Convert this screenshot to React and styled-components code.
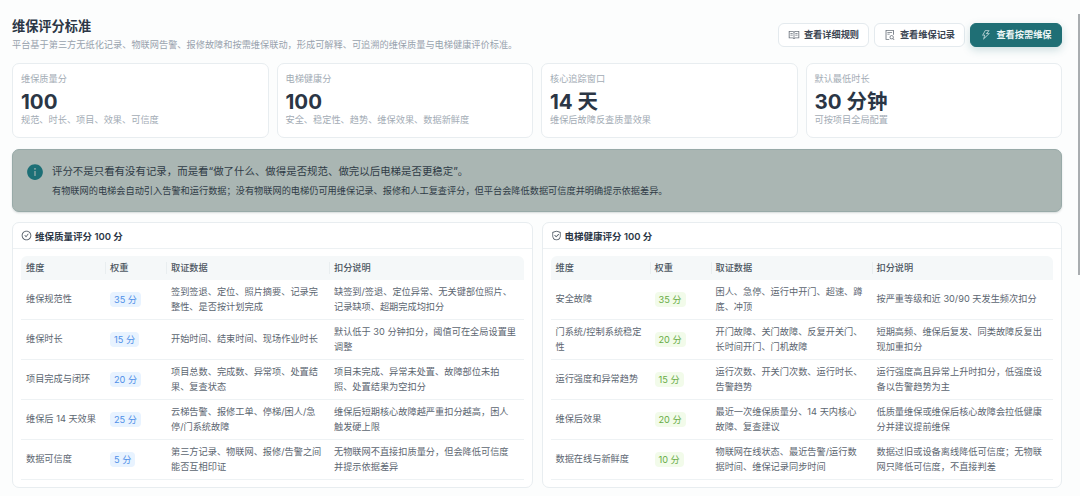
import React from "react";
import styled, { createGlobalStyle } from "styled-components";
import {
  AiFillInfoCircle,
  AiOutlineCheckCircle,
  AiOutlineFileSearch,
  AiOutlineRead,
  AiOutlineSafety,
  AiOutlineThunderbolt,
} from "react-icons/ai";

const Global = createGlobalStyle`
  html, body { margin: 0; padding: 0; background: #fcfdfd; overflow: hidden; }
  body {
    font-family: Inter, "Noto Sans CJK SC", "Noto Sans", sans-serif;
    color: #2b3645;
  }
`;

const Page = styled.main`
  position: relative;
  width: 1080px;
  height: 496px;
  box-sizing: border-box;
  padding: 16px 18px 0 12px;
  display: flex;
  flex-direction: column;
  overflow: hidden;
`;

/* thin scrollbar thumb at the window edge */
const ScrollThumb = styled.div`
  position: absolute;
  top: 14px;
  right: 0;
  width: 2px;
  height: 261px;
  background: #a9adb0;
`;

const Header = styled.header`
  display: flex;
  justify-content: space-between;
  align-items: flex-start;
  height: 47px;
`;

const Title = styled.h1`
  margin: 1px 0 0;
  font-size: 13.2px;
  line-height: 19px;
  font-weight: 700;
  color: #2b3645;
`;

const Subtitle = styled.p`
  margin: 2px 0 0;
  font-size: 9.2px;
  line-height: 14px;
  color: #98a2ad;
`;

const Actions = styled.div`
  display: flex;
  gap: 5px;
  margin-top: 7px;
`;

const Button = styled.button`
  height: 24px;
  width: ${({ $w }) => $w}px;
  box-sizing: border-box;
  display: inline-flex;
  align-items: center;
  justify-content: center;
  gap: 4px;
  padding: 0;
  border-radius: 6px;
  font: 600 9.2px/1 Inter, "Noto Sans CJK SC", sans-serif;
  border: 1px solid ${({ $primary }) => ($primary ? "#1f6f75" : "#e4eaee")};
  background: ${({ $primary }) => ($primary ? "#1f6f75" : "#fff")};
  color: ${({ $primary }) => ($primary ? "#eef6f6" : "#3b4552")};
  box-shadow: ${({ $primary }) => ($primary ? "0 3px 8px rgba(31,111,117,.22)" : "none")};
  svg { font-size: 12px; opacity: .75; }
`;

const Stats = styled.section`
  display: grid;
  grid-template-columns: repeat(4, 1fr);
  gap: 8px;
`;

const Stat = styled.article`
  height: 75px;
  box-sizing: border-box;
  padding: 9px 8px;
  border: 1px solid #e8edf0;
  border-radius: 7px;
  background: #fff;
`;

const StatLabel = styled.div`
  font-size: 9.2px;
  line-height: 12px;
  color: #a3acb5;
`;

const StatValue = styled.div`
  font-size: 20.5px;
  line-height: 24px;
  margin-top: 5px;
  font-weight: 700;
  color: #2b3645;
`;

const StatNote = styled.div`
  font-size: 9.2px;
  line-height: 12px;
  color: #a3acb5;
`;

const Alert = styled.section`
  margin-top: 11px;
  height: 63px;
  box-sizing: border-box;
  padding: 13px 13px;
  display: flex;
  gap: 8px;
  border: 1px solid #98aaa8;
  border-radius: 7px;
  background: #aab6b3;
  box-shadow: 0 1px 2px rgba(60,80,80,.2);
`;

const AlertIcon = styled(AiFillInfoCircle)`
  flex: none;
  font-size: 18px;
  color: #1d6f76;
`;

const AlertTitle = styled.div`
  font-size: 10.45px;
  line-height: 18px;
  color: #2f3b46;
`;

const AlertText = styled.div`
  margin-top: 3px;
  font-size: 9.2px;
  line-height: 13px;
  color: #2f3b46;
`;

const Panels = styled.section`
  margin-top: 10px;
  display: grid;
  grid-template-columns: 1fr 1fr;
  gap: 9px;
`;

const Panel = styled.article`
  height: 266px;
  box-sizing: border-box;
  border: 1px solid #e8edf0;
  border-radius: 7px;
  background: #fff;
  overflow: hidden;
`;

const PanelHead = styled.h2`
  margin: 0;
  height: 26px;
  box-sizing: border-box;
  padding: 0 8px;
  display: flex;
  align-items: center;
  gap: 3px;
  font-size: 9.5px;
  font-weight: 600;
  color: #2b3645;
  border-bottom: 1px solid #edf1f3;
  svg { font-size: 11px; color: #4a5561; }
`;

const PanelBody = styled.div`
  padding: 7px 8px 0;
`;

const Table = styled.table`
  width: 100%;
  table-layout: fixed;
  border-collapse: separate;
  border-spacing: 0;
  font-size: 9.2px;
  line-height: 14.5px;
  color: #5c6671;
`;

const Column = styled.col`
  width: ${({ $w }) => ($w ? `${$w}px` : "auto")};
`;

const Th = styled.th`
  position: relative;
  height: 24px;
  padding: 0 5px;
  text-align: left;
  font-weight: 500;
  color: #4d5762;
  background: #f5f8f9;
  &:first-child { border-radius: 6px 0 0 0; }
  &:last-child { border-radius: 0 6px 0 0; }
  &:not(:first-child)::before {
    content: "";
    position: absolute;
    left: 0;
    top: 6px;
    bottom: 6px;
    width: 1px;
    background: #e9eef0;
  }
`;

const Td = styled.td`
  height: 40px;
  box-sizing: border-box;
  padding: 0 7px 0 5px;
  border-bottom: 1px solid #eef2f4;
  vertical-align: middle;
`;

const Tag = styled.span`
  display: inline-block;
  padding: 0 4px;
  height: 15px;
  line-height: 15px;
  border-radius: 4px;
  color: ${({ $green }) => ($green ? "#67ac45" : "#4f8fe8")};
  background: ${({ $green }) => ($green ? "#f2fbea" : "#e8f3ff")};
`;

const stats = [
  ["维保质量分", "100", "规范、时长、项目、效果、可信度"],
  ["电梯健康分", "100", "安全、稳定性、趋势、维保效果、数据新鲜度"],
  ["核心追踪窗口", "14 天", "维保后故障反查质量效果"],
  ["默认最低时长", "30 分钟", "可按项目全局配置"],
];

const qualityRows = [
  ["维保规范性", "35 分", "签到签退、定位、照片摘要、记录完整性、是否按计划完成", "缺签到/签退、定位异常、无关键部位照片、记录缺项、超期完成均扣分"],
  ["维保时长", "15 分", "开始时间、结束时间、现场作业时长", "默认低于 30 分钟扣分，阈值可在全局设置里调整"],
  ["项目完成与闭环", "20 分", "项目总数、完成数、异常项、处置结果、复查状态", "项目未完成、异常未处置、故障部位未拍照、处置结果为空扣分"],
  ["维保后 14 天效果", "25 分", "云梯告警、报修工单、停梯/困人/急停/门系统故障", "维保后短期核心故障越严重扣分越高，困人触发硬上限"],
  ["数据可信度", "5 分", "第三方记录、物联网、报修/告警之间能否互相印证", "无物联网不直接扣质量分，但会降低可信度并提示依据差异"],
];

const healthRows = [
  ["安全故障", "35 分", "困人、急停、运行中开门、超速、蹲底、冲顶", "按严重等级和近 30/90 天发生频次扣分"],
  ["门系统/控制系统稳定性", "20 分", "开门故障、关门故障、反复开关门、长时间开门、门机故障", "短期高频、维保后复发、同类故障反复出现加重扣分"],
  ["运行强度和异常趋势", "15 分", "运行次数、开关门次数、运行时长、告警趋势", "运行强度高且异常上升时扣分，低强度设备以告警趋势为主"],
  ["维保后效果", "20 分", "最近一次维保质量分、14 天内核心故障、复查建议", "低质量维保或维保后核心故障会拉低健康分并建议提前维保"],
  ["数据在线与新鲜度", "10 分", "物联网在线状态、最近告警/运行数据时间、维保记录同步时间", "数据过旧或设备离线降低可信度；无物联网只降低可信度，不直接判差"],
];

function ScoreTable({ rows, widths, green }) {
  return (
    <Table>
      <colgroup>
        {widths.map((w, i) => <Column key={i} $w={w} />)}
        <Column />
      </colgroup>
      <thead>
        <tr>
          <Th>维度</Th>
          <Th>权重</Th>
          <Th>取证数据</Th>
          <Th>扣分说明</Th>
        </tr>
      </thead>
      <tbody>
        {rows.map(([name, weight, evidence, rule]) => (
          <tr key={name}>
            <Td>{name}</Td>
            <Td><Tag $green={green}>{weight}</Tag></Td>
            <Td>{evidence}</Td>
            <Td>{rule}</Td>
          </tr>
        ))}
      </tbody>
    </Table>
  );
}

export default function App() {
  return (
    <Page>
      <Global />
      <ScrollThumb />
      <Header>
        <div>
          <Title>维保评分标准</Title>
          <Subtitle>平台基于第三方无纸化记录、物联网告警、报修故障和按需维保联动，形成可解释、可追溯的维保质量与电梯健康评价标准。</Subtitle>
        </div>
        <Actions>
          <Button $w={91}><AiOutlineRead />查看详细规则</Button>
          <Button $w={91}><AiOutlineFileSearch />查看维保记录</Button>
          <Button $w={92} $primary><AiOutlineThunderbolt />查看按需维保</Button>
        </Actions>
      </Header>

      <Stats>
        {stats.map(([label, value, note]) => (
          <Stat key={label}>
            <StatLabel>{label}</StatLabel>
            <StatValue>{value}</StatValue>
            <StatNote>{note}</StatNote>
          </Stat>
        ))}
      </Stats>

      <Alert>
        <AlertIcon />
        <div>
          <AlertTitle>评分不是只看有没有记录，而是看“做了什么、做得是否规范、做完以后电梯是否更稳定”。</AlertTitle>
          <AlertText>有物联网的电梯会自动引入告警和运行数据；没有物联网的电梯仍可用维保记录、报修和人工复查评分，但平台会降低数据可信度并明确提示依据差异。</AlertText>
        </div>
      </Alert>

      <Panels>
        <Panel>
          <PanelHead><AiOutlineCheckCircle />维保质量评分 100 分</PanelHead>
          <PanelBody><ScoreTable rows={qualityRows} widths={[84, 61, 163]} /></PanelBody>
        </Panel>
        <Panel>
          <PanelHead><AiOutlineSafety />电梯健康评分 100 分</PanelHead>
          <PanelBody><ScoreTable rows={healthRows} widths={[99, 61, 161]} green /></PanelBody>
        </Panel>
      </Panels>
    </Page>
  );
}
